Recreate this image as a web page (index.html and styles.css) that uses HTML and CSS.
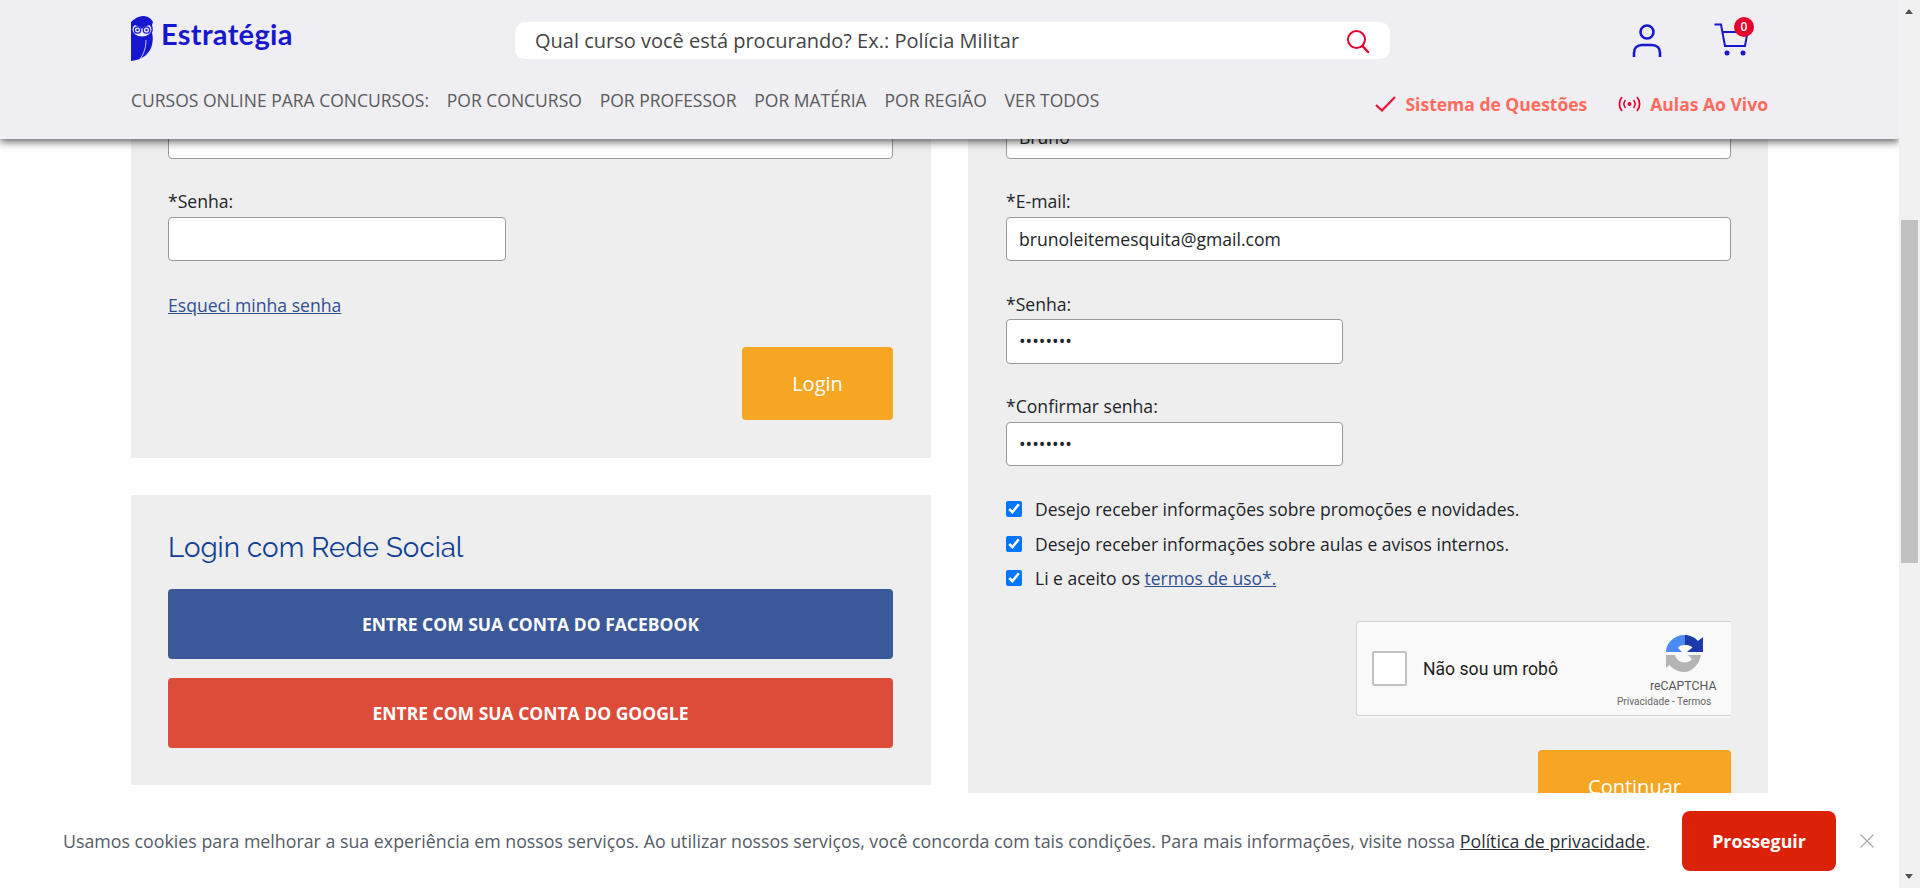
FILE: index.html
```html
<!DOCTYPE html>
<html lang="pt-BR">
<head>
  <meta charset="UTF-8">
  <title>Estratégia Concursos - Login</title>
  <link rel="stylesheet" href="styles.css">
</head>
<body>
  <div class="viewport">

    <!-- conteudo rolado -->
    <main class="content">
      <section class="col">
        <div class="panel panel-login">
          <div class="input input-full input-cut"></div>
          <label class="field-label">*Senha:</label>
          <div class="input input-short"></div>
          <a class="forgot" href="#">Esqueci minha senha</a>
          <div class="btn-row"><button class="btn-orange btn-login">Login</button></div>
        </div>
        <div class="panel panel-social">
          <h2 class="social-title">Login com Rede Social</h2>
          <button class="btn-social btn-fb">ENTRE COM SUA CONTA DO FACEBOOK</button>
          <button class="btn-social btn-google">ENTRE COM SUA CONTA DO GOOGLE</button>
        </div>
      </section>

      <section class="col">
        <div class="panel panel-register">
          <div class="input input-full input-cut">Bruno</div>
          <label class="field-label">*E-mail:</label>
          <div class="input input-full">brunoleitemesquita@gmail.com</div>
          <label class="field-label">*Senha:</label>
          <div class="input input-short">••••••••</div>
          <label class="field-label">*Confirmar senha:</label>
          <div class="input input-short">••••••••</div>

          <ul class="checks">
            <li><input type="checkbox" checked> Desejo receber informações sobre promoções e novidades.</li>
            <li><input type="checkbox" checked> Desejo receber informações sobre aulas e avisos internos.</li>
            <li><input type="checkbox" checked> <span>Li e aceito os <a href="#">termos de uso*.</a></span></li>
          </ul>

          <div class="captcha-row">
            <div class="captcha">
              <span class="captcha-box"></span>
              <span class="captcha-text">Não sou um robô</span>
              <div class="captcha-brand">
                <svg class="captcha-logo" viewBox="0 0 37 37" width="37" height="37">
                  <path d="M18.500 0 V10 C15 10 13 11 12 13 L16 17 H0 C0 8 8 0 18.500 0Z" fill="#4a8af4"/>
                  <path d="M18.500 0 C24 0 29 2.500 32 6 L37 2 V17 H21 L26.500 12.500 C24.500 10.500 22 10 18.500 10Z" fill="#1c3aa9"/>
                  <path d="M0 20 H9 C10 24 14 27.500 18.500 27.500 C22 27.500 24 26 26 24 L22 20 H35 C33 30 26 37 18 37 C12 37 7 34 3.500 30 L0 33Z" fill="#b4b4b4"/>
                </svg>
                <span class="captcha-name">reCAPTCHA</span>
                <span class="captcha-links">Privacidade - Termos</span>
              </div>
            </div>
          </div>

          <div class="btn-row"><button class="btn-orange btn-continue">Continuar</button></div>
        </div>
      </section>
    </main>

    <!-- cabecalho fixo -->
    <header class="topbar">
      <div class="topbar-line">
        <a class="logo" href="#">
          <svg class="owl" viewBox="0 0 22 45" width="22" height="45">
            <path d="M0 6 C4 2 8 0 12 0 C16 0 20 2 22 6 L21 9 C22 12 22 15 21 17 C22 20 22 24 21 29 C19 37 12 44 0 45Z" fill="#1717cf"/>
            <ellipse cx="11" cy="13.500" rx="9.500" ry="7" fill="#efeef3"/>
            <path d="M1 8 L9 11 L11 13 L13 11 L21 8 L21 5 C17 3 5 3 1 5Z" fill="#1717cf"/>
            <circle cx="6.500" cy="14" r="3.200" fill="none" stroke="#1717cf" stroke-width="1.300"/>
            <circle cx="15.500" cy="14" r="3.200" fill="none" stroke="#1717cf" stroke-width="1.300"/>
            <circle cx="6.500" cy="14" r="1.200" fill="#1717cf"/>
            <circle cx="15.500" cy="14" r="1.200" fill="#1717cf"/>
            <path d="M9 43 C13 38 15 31 15 24" fill="none" stroke="#efeef3" stroke-width="0.800"/>
          </svg>
          <span class="logo-text">Estratégia</span>
        </a>
        <div class="search">
          <span class="search-text">Qual curso você está procurando? Ex.: Polícia Militar</span>
          <svg class="search-icon" viewBox="0 0 24 24" width="24" height="24">
            <circle cx="10.500" cy="10.500" r="8.500" fill="none" stroke="#e8002d" stroke-width="2"/>
            <path d="M16.500 17 L22 23" fill="none" stroke="#e8002d" stroke-width="2.400" stroke-linecap="round"/>
          </svg>
        </div>
        <div class="top-icons">
          <svg class="user-icon" viewBox="0 0 32 36" width="32" height="36">
            <circle cx="16" cy="9" r="6.500" fill="none" stroke="#1717cf" stroke-width="2.600"/>
            <path d="M3 34 V30 C3 25 6 22 11 22 H21 C26 22 29 25 29 30 V34" fill="none" stroke="#1717cf" stroke-width="2.600"/>
          </svg>
          <div class="cart">
            <svg viewBox="0 0 34 36" width="34" height="36">
              <path d="M0.500 1.500 H7 L11 23 H31 L33.500 9 H8" fill="none" stroke="#1717cf" stroke-width="2"/>
              <circle cx="13" cy="30" r="2.500" fill="#1717cf"/>
              <circle cx="29" cy="30" r="2.500" fill="#1717cf"/>
            </svg>
            <span class="cart-badge">0</span>
          </div>
        </div>
      </div>
      <div class="topbar-line topbar-nav">
        <nav class="menu">
          <a href="#">CURSOS ONLINE PARA CONCURSOS:</a>
          <a href="#">POR CONCURSO</a>
          <a href="#">POR PROFESSOR</a>
          <a href="#">POR MATÉRIA</a>
          <a href="#">POR REGIÃO</a>
          <a href="#">VER TODOS</a>
        </nav>
        <div class="shortcuts">
          <a href="#">
            <svg viewBox="0 0 21 16" width="21" height="16"><path d="M1 9 L7 14.500 L20 1" fill="none" stroke="#f0103c" stroke-width="2.200"/></svg>
            Sistema de Questões
          </a>
          <a href="#">
            <svg viewBox="0 0 23 16" width="23" height="16">
              <circle cx="11.500" cy="8" r="2" fill="#e8002d"/>
              <path d="M7.500 4 C5.500 6.500 5.500 9.500 7.500 12 M15.500 4 C17.500 6.500 17.500 9.500 15.500 12" fill="none" stroke="#e8002d" stroke-width="1.500"/>
              <path d="M4 1 C0.500 5 0.500 11 4 15 M19 1 C22.500 5 22.500 11 19 15" fill="none" stroke="#e8002d" stroke-width="1.800"/>
            </svg>
            Aulas Ao Vivo
          </a>
        </div>
      </div>
    </header>

    <!-- barra de rolagem -->
    <div class="scrollbar">
      <span class="arrow arrow-up"></span>
      <span class="thumb"></span>
      <span class="arrow arrow-down"></span>
    </div>

    <!-- aviso de cookies -->
    <div class="cookie">
      <p class="cookie-text">Usamos cookies para melhorar a sua experiência em nossos serviços. Ao utilizar nossos serviços, você concorda com tais condições. Para mais informações, visite nossa <a href="#">Política de privacidade</a>.</p>
      <button class="cookie-btn">Prosseguir</button>
      <svg class="cookie-close" viewBox="0 0 14 14" width="14" height="14">
        <path d="M0.500 0.500 L13.500 13.500 M13.500 0.500 L0.500 13.500" fill="none" stroke="#aaa" stroke-width="1.200"/>
      </svg>
    </div>
  </div>
</body>
</html>
```

FILE: styles.css
```css
* {
  box-sizing: border-box;
}
html, body {
  margin: 0;
  padding: 0;
  height: 100%;
  overflow: hidden;
}
body {
  font-family: 'Open Sans', sans-serif;
  background-color: #fff;
  color: #212529;
}
a {
  color: #2f4f93;
}
.viewport {
  position: relative;
  width: 1920px;
  height: 888px;
  overflow: hidden;
}

/* conteudo */
.content {
  display: flex;
  gap: 37px;
  padding: 0 0 0 131px;
  margin-top: 100px;
}
.col {
  width: 800px;
  display: flex;
  flex-direction: column;
  gap: 37px;
}
.panel {
  background-color: #eee;
  padding: 0 37px;
}
.panel-login {
  height: 358px;
  padding-right: 38px;
}
.panel-login .input-short {
  width: 338px;
}
.panel-social {
  height: 290px;
  padding-top: 34px;
}
.panel-register {
  height: 760px;
  padding-left: 38px;
}
.input {
  height: 44.400px;
  border: 1px solid #999;
  border-radius: 4px;
  background-color: #fff;
  font-size: 17.600px;
  line-height: 42.400px;
  padding: 0 12px;
  color: #212529;
}
.input-full {
  width: 725px;
}
.input-short {
  width: 337px;
}
.input-cut {
  height: 58.700px;
  margin-bottom: 1px;
  padding-top: 15px;
}
.field-label {
  display: block;
  font-size: 17.600px;
  line-height: 26.400px;
  margin: 29.500px 0 2.300px;
  color: #212529;
}
.forgot {
  display: block;
  margin-top: 30.500px;
  font-size: 17.600px;
  line-height: 26.400px;
}
.btn-row {
  display: flex;
  justify-content: flex-end;
}
.btn-orange {
  background-color: #f6a623;
  color: #fff;
  border: none;
  border-radius: 4px;
  font-family: inherit;
  font-size: 20px;
}
.btn-login {
  width: 151px;
  height: 73.500px;
  margin-top: 28.500px;
}
.btn-continue {
  width: 193px;
  height: 73px;
  margin-top: 34px;
}
.social-title {
  font-family: 'Raleway', 'Lato', sans-serif;
  font-weight: 400;
  font-size: 27.800px;
  line-height: 38px;
  color: #0f3f94;
  margin: 0 0 22px;
}
.btn-social {
  display: block;
  width: 725px;
  height: 70px;
  border: none;
  border-radius: 4px;
  color: #fff;
  font-family: inherit;
  font-weight: 700;
  font-size: 17.500px;
  margin-bottom: 19px;
}
.btn-fb {
  background-color: #3b5998;
}
.btn-google {
  background-color: #dd4b39;
}
.checks {
  list-style: none;
  margin: 25.800px 0 0;
  padding: 0;
  font-size: 17.500px;
}
.checks li {
  display: flex;
  align-items: center;
  height: 34.300px;
  color: #212529;
}
.checks input {
  width: 16px;
  height: 16px;
  margin: 0 13px 0 0;
  accent-color: #0075ff;
}
.checks a {
  color: #2f4f93;
}
.captcha-row {
  display: flex;
  justify-content: flex-end;
  margin-top: 26px;
}
.captcha {
  width: 375px;
  height: 95px;
  display: flex;
  align-items: center;
  position: relative;
  background-color: #f9f9f9;
  border: 1px solid #d3d3d3;
  border-right: none;
  border-radius: 3px 0 0 3px;
  font-family: Roboto, sans-serif;
  box-shadow: 0 2px 0 #f6f6f6;
}
.captcha-box {
  width: 35px;
  height: 35px;
  margin-left: 15px;
  background-color: #fff;
  border: 2px solid #c1c1c1;
  border-radius: 2px;
}
.captcha-text {
  margin-left: 16px;
  font-size: 17.600px;
  color: #222;
}
.captcha-brand {
  position: absolute;
  right: 14px;
  top: 13px;
  width: 100px;
  display: flex;
  flex-direction: column;
  align-items: flex-start;
}
.captcha-logo {
  margin-left: 49px;
}
.captcha-name {
  font-size: 12.300px;
  line-height: 14px;
  margin: 7px 0 0 33px;
  color: #555;
}
.captcha-links {
  font-size: 10.100px;
  line-height: 12px;
  margin-top: 3px;
  color: #666;
  white-space: nowrap;
}

/* cabecalho */
.topbar {
  position: absolute;
  top: 0;
  left: 0;
  width: 1899px;
  height: 139px;
  background-color: #efeef3;
  box-shadow: 0 3px 8px rgba(0, 0, 0, 0.6);
  padding: 16px 131px 0;
}
.topbar-line {
  display: flex;
  align-items: flex-start;
  position: relative;
}
.logo {
  display: flex;
  align-items: flex-start;
  text-decoration: none;
  width: 384px;
}
.logo-text {
  font-family: Lato, sans-serif;
  font-weight: 700;
  font-size: 29px;
  letter-spacing: 0.300px;
  line-height: 36px;
  color: #1717cf;
  margin-left: 8px;
}
.search {
  width: 875px;
  height: 37px;
  margin-top: 6px;
  background-color: #fff;
  border-radius: 10px;
  display: flex;
  align-items: center;
  justify-content: space-between;
  padding: 0 20px;
  font-size: 20px;
  color: #444;
}
.top-icons {
  display: flex;
  align-items: flex-start;
  gap: 51px;
  margin-left: 241px;
  margin-top: 7px;
}
.cart {
  position: relative;
  width: 34px;
  height: 36px;
}
.cart-badge {
  position: absolute;
  left: 20px;
  top: -6px;
  width: 20px;
  height: 20px;
  border-radius: 50%;
  background-color: #e8002d;
  color: #fff;
  font-size: 12px;
  font-weight: 600;
  line-height: 20px;
  text-align: center;
}
.topbar-nav {
  margin-top: 25.500px;
  justify-content: space-between;
}
.menu {
  display: flex;
  gap: 17.800px;
}
.menu a {
  color: #5a5a5a;
  text-decoration: none;
  font-size: 17.500px;
  line-height: 26.400px;
}
.shortcuts {
  display: flex;
  gap: 31px;
  margin-top: 4.500px;
}
.shortcuts a {
  display: flex;
  align-items: center;
  gap: 9px;
  color: #ff6b5c;
  text-decoration: none;
  font-weight: 700;
  font-size: 17.500px;
  line-height: 26.400px;
}

/* barra de rolagem */
.scrollbar {
  position: absolute;
  top: 0;
  right: 0;
  width: 21px;
  height: 888px;
  background-color: #f1f1f1;
}
.thumb {
  position: absolute;
  top: 220px;
  left: 2px;
  width: 17px;
  height: 343px;
  background-color: #c1c1c1;
}
.arrow {
  position: absolute;
  left: 6px;
  width: 0;
  height: 0;
  border-left: 4.500px solid transparent;
  border-right: 4.500px solid transparent;
}
.arrow-up {
  top: 9px;
  border-bottom: 5px solid #505050;
}
.arrow-down {
  bottom: 9px;
  border-top: 5px solid #505050;
}

/* cookies */
.cookie {
  position: absolute;
  left: 0;
  bottom: 0;
  width: 1899px;
  height: 95px;
  background-color: #fff;
  display: flex;
  align-items: center;
  padding-left: 63px;
}
.cookie-text {
  margin: 0;
  width: 1589px;
  font-size: 17.800px;
  color: #555b66;
  white-space: nowrap;
}
.cookie-text a {
  color: #2b2f38;
}
.cookie-btn {
  flex: none;
  width: 154px;
  height: 60px;
  margin-left: 30px;
  background-color: #dc2109;
  color: #fff;
  border: none;
  border-radius: 8px;
  font-family: inherit;
  font-weight: 700;
  font-size: 17.800px;
}
.cookie-close {
  flex: none;
  margin-left: 24px;
}
```
